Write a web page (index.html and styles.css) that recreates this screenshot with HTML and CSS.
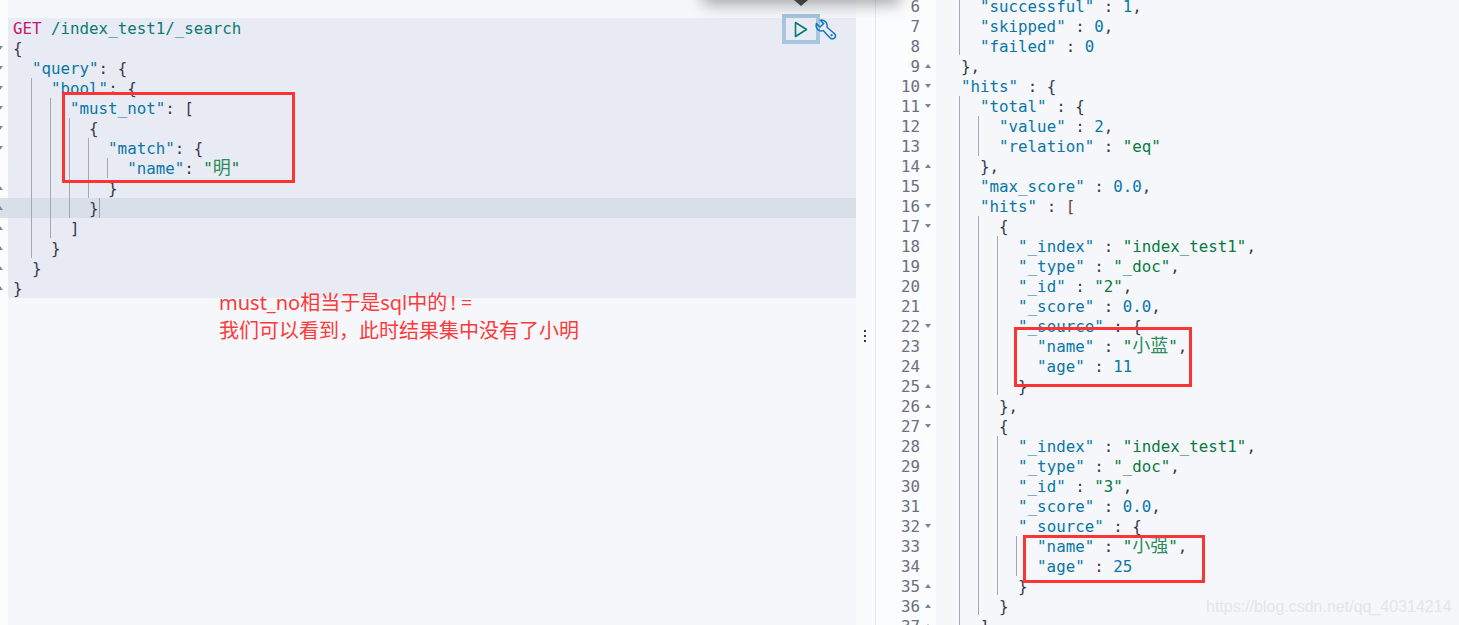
FILE: index.html
```html
<!DOCTYPE html>
<html lang="zh">
<head>
<meta charset="utf-8">
<title>Console</title>
<link rel="stylesheet" href="styles.css">
</head>
<body>
<div class="app">
  <section class="request">
    <div class="spacer"></div>
    <div class="line sel"><span class="fold"></span><code><i class="m">GET</i> <i class="u">/index_test1/_search</i></code></div>
    <div class="line sel"><span class="fold dn"></span><code><i class="p">{</i></code></div>
    <div class="line sel"><span class="fold dn"></span><code>  <i class="k">"query"</i><i class="p">: {</i></code></div>
    <div class="line sel"><span class="fold dn"></span><code>    <i class="k">"bool"</i><i class="p">: {</i></code></div>
    <div class="line sel"><span class="fold dn"></span><code>      <i class="k">"must_not"</i><i class="p">: [</i></code></div>
    <div class="line sel"><span class="fold dn"></span><code>        <i class="p">{</i></code></div>
    <div class="line sel"><span class="fold dn"></span><code>          <i class="k">"match"</i><i class="p">: {</i></code></div>
    <div class="line sel"><span class="fold"></span><code>            <i class="k">"name"</i><i class="p">:</i> <i class="s">"<i class="c">明</i>"</i></code></div>
    <div class="line sel"><span class="fold up"></span><code>          <i class="p">}</i></code></div>
    <div class="line active"><span class="fold up"></span><code>        <i class="p">}</i><b class="cursor"></b></code></div>
    <div class="line sel"><span class="fold up"></span><code>      <i class="p">]</i></code></div>
    <div class="line sel"><span class="fold up"></span><code>    <i class="p">}</i></code></div>
    <div class="line sel"><span class="fold up"></span><code>  <i class="p">}</i></code></div>
    <div class="line sel"><span class="fold up"></span><code><i class="p">}</i></code></div>

    <span class="guide g1"></span><span class="guide g2"></span><span class="guide g3"></span><span class="guide g4"></span><span class="guide g5"></span>

    <div class="actions">
      <button class="play" aria-label="run">
        <svg width="14" height="17" viewBox="0 0 14 17"><path d="M1.5 1.5 L12.5 8.5 L1.5 15.5 Z" fill="none" stroke="#017d73" stroke-width="1.6" stroke-linejoin="round"/></svg>
      </button>
      <svg class="wrench" width="22" height="22" viewBox="0 0 22 22"><path d="M5.2 1.2 L8.6 4.6 L5 8 L1.5 4.6 C.4 7.8 2 11 5.2 11.8 C6.2 12 7.4 12 8.2 11.6 L14.6 18.6 C16.2 20.4 18.8 20.2 19.8 18.8 C20.8 17.2 20.4 15.2 19 14.2 L12 8.2 C12.4 6.4 12 4.2 10.6 2.8 C9.2 1.4 7 .8 5.2 1.2 Z" fill="none" stroke="#1478c0" stroke-width="1.5" stroke-linejoin="round"/><circle cx="16.6" cy="16.2" r="1.1" fill="#1478c0"/></svg>
    </div>
    <div class="tip"></div>
    <div class="tip-arrow"></div>

    <span class="mark box1"></span>
    <div class="note">
      <p>must_no相当于是sql中的 <span class="bang">!</span>=</p>
      <p>我们可以看到，此时结果集中没有了小明</p>
    </div>
  </section>

  <div class="resizer"><span></span><span></span><span></span></div>

  <section class="response">
    <div class="rows" id="rows">
      <div class="row"><span class="num">6</span><span class="arr"></span><code>    <i class="k">"successful"</i> <i class="p">:</i> <i class="n">1</i><i class="p">,</i></code></div>
      <div class="row"><span class="num">7</span><span class="arr"></span><code>    <i class="k">"skipped"</i> <i class="p">:</i> <i class="n">0</i><i class="p">,</i></code></div>
      <div class="row"><span class="num">8</span><span class="arr"></span><code>    <i class="k">"failed"</i> <i class="p">:</i> <i class="n">0</i></code></div>
      <div class="row"><span class="num">9</span><span class="arr up"></span><code>  <i class="p">},</i></code></div>
      <div class="row"><span class="num">10</span><span class="arr dn"></span><code>  <i class="k">"hits"</i> <i class="p">: {</i></code></div>
      <div class="row"><span class="num">11</span><span class="arr dn"></span><code>    <i class="k">"total"</i> <i class="p">: {</i></code></div>
      <div class="row"><span class="num">12</span><span class="arr"></span><code>      <i class="k">"value"</i> <i class="p">:</i> <i class="n">2</i><i class="p">,</i></code></div>
      <div class="row"><span class="num">13</span><span class="arr"></span><code>      <i class="k">"relation"</i> <i class="p">:</i> <i class="s">"eq"</i></code></div>
      <div class="row"><span class="num">14</span><span class="arr up"></span><code>    <i class="p">},</i></code></div>
      <div class="row"><span class="num">15</span><span class="arr"></span><code>    <i class="k">"max_score"</i> <i class="p">:</i> <i class="n">0.0</i><i class="p">,</i></code></div>
      <div class="row"><span class="num">16</span><span class="arr dn"></span><code>    <i class="k">"hits"</i> <i class="p">: </i><i class="b">[</i></code></div>
      <div class="row"><span class="num">17</span><span class="arr dn"></span><code>      <i class="p">{</i></code></div>
      <div class="row"><span class="num">18</span><span class="arr"></span><code>        <i class="k">"_index"</i> <i class="p">:</i> <i class="s">"index_test1"</i><i class="p">,</i></code></div>
      <div class="row"><span class="num">19</span><span class="arr"></span><code>        <i class="k">"_type"</i> <i class="p">:</i> <i class="s">"_doc"</i><i class="p">,</i></code></div>
      <div class="row"><span class="num">20</span><span class="arr"></span><code>        <i class="k">"_id"</i> <i class="p">:</i> <i class="s">"2"</i><i class="p">,</i></code></div>
      <div class="row"><span class="num">21</span><span class="arr"></span><code>        <i class="k">"_score"</i> <i class="p">:</i> <i class="n">0.0</i><i class="p">,</i></code></div>
      <div class="row"><span class="num">22</span><span class="arr dn"></span><code>        <i class="k">"_source"</i> <i class="p">: {</i></code></div>
      <div class="row"><span class="num">23</span><span class="arr"></span><code>          <i class="k">"name"</i> <i class="p">:</i> <i class="s">"<i class="c">小蓝</i>"</i><i class="p">,</i></code></div>
      <div class="row"><span class="num">24</span><span class="arr"></span><code>          <i class="k">"age"</i> <i class="p">:</i> <i class="n">11</i></code></div>
      <div class="row"><span class="num">25</span><span class="arr up"></span><code>        <i class="p">}</i></code></div>
      <div class="row"><span class="num">26</span><span class="arr up"></span><code>      <i class="p">},</i></code></div>
      <div class="row"><span class="num">27</span><span class="arr dn"></span><code>      <i class="p">{</i></code></div>
      <div class="row"><span class="num">28</span><span class="arr"></span><code>        <i class="k">"_index"</i> <i class="p">:</i> <i class="s">"index_test1"</i><i class="p">,</i></code></div>
      <div class="row"><span class="num">29</span><span class="arr"></span><code>        <i class="k">"_type"</i> <i class="p">:</i> <i class="s">"_doc"</i><i class="p">,</i></code></div>
      <div class="row"><span class="num">30</span><span class="arr"></span><code>        <i class="k">"_id"</i> <i class="p">:</i> <i class="s">"3"</i><i class="p">,</i></code></div>
      <div class="row"><span class="num">31</span><span class="arr"></span><code>        <i class="k">"_score"</i> <i class="p">:</i> <i class="n">0.0</i><i class="p">,</i></code></div>
      <div class="row"><span class="num">32</span><span class="arr dn"></span><code>        <i class="k">"_source"</i> <i class="p">: {</i></code></div>
      <div class="row"><span class="num">33</span><span class="arr"></span><code>          <i class="k">"name"</i> <i class="p">:</i> <i class="s">"<i class="c">小强</i>"</i><i class="p">,</i></code></div>
      <div class="row"><span class="num">34</span><span class="arr"></span><code>          <i class="k">"age"</i> <i class="p">:</i> <i class="n">25</i></code></div>
      <div class="row"><span class="num">35</span><span class="arr up"></span><code>        <i class="p">}</i></code></div>
      <div class="row"><span class="num">36</span><span class="arr up"></span><code>      <i class="p">}</i></code></div>
      <div class="row"><span class="num">37</span><span class="arr up"></span><code>    <i class="p">]</i></code></div>
    </div>
    <span class="guide r1"></span><span class="guide r2"></span>
    <span class="guide r3"></span><span class="guide r4"></span>
    <span class="guide r5"></span><span class="guide r6"></span>
    <span class="guide r7"></span><span class="guide r8"></span>
    <span class="mark box2"></span>
    <span class="mark box3"></span>
    <span class="water">https://blog.csdn.net/qq_40314214</span>
  </section>
</div>
</body>
</html>
```
FILE: styles.css
```css
html, body {
  margin: 0;
  height: 625px;
  overflow: hidden;
  background: #f5f7fb;
}
.app {
  position: relative;
  display: flex;
  width: 1459px;
  height: 625px;
  overflow: hidden;
}
i { font-style: normal; }
code {
  font-family: "DejaVu Sans Mono", "Noto Sans CJK SC", monospace;
  font-size: 15.8px;
  line-height: 20px;
  white-space: pre;
  padding-top: 1px;
}
.c {
  font-family: "Noto Sans CJK SC", sans-serif;
  font-size: 18px;
  line-height: 0;
  color: #2b8c5c;
}
.k { color: #0a76a6; }
.s { color: #08793f; }
.n { color: #0a76a6; }
.p { color: #383a4e; }
.b { color: #7a3d3d; }
.m { color: #c6186f; }
.u { color: #0b7a76; }

/* request pane */
.request {
  position: relative;
  width: 856px;
  flex: none;
  background: linear-gradient(to right, #fbfcfe 0, #fbfcfe 8px, #f5f7fb 8px);
}
.spacer { height: 18px; }
.line {
  display: flex;
  height: 20px;
}
.line code { padding-left: 5px; }
.line.sel { background: linear-gradient(to right, #fbfcfe 0, #fbfcfe 8px, #e8ebf3 8px); }
.line.active { background: #d9dfe9; }
.fold {
  width: 8px;
  flex: none;
  position: relative;
  overflow: hidden;
}
.fold.dn::after, .fold.up::after {
  content: "";
  position: absolute;
  left: -3px;
  top: 8px;
  border-left: 3px solid transparent;
  border-right: 3px solid transparent;
}
.fold.dn::after { border-top: 4px solid #85888f; }
.fold.up::after { border-bottom: 4px solid #85888f; }
.cursor {
  display: inline-block;
  width: 1px;
  height: 20px;
  margin-top: -1px;
  background: #9aa0ab;
  vertical-align: top;
}
.guide {
  position: absolute;
  width: 1px;
  background: #a4a8b4;
}
.g1 { left: 31px; top: 78px; height: 180px; }
.g2 { left: 50px; top: 98px; height: 140px; }
.g3 { left: 69px; top: 118px; height: 100px; }
.g4 { left: 88px; top: 138px; height: 60px; }
.g5 { left: 107px; top: 158px; height: 20px; }

.actions {
  position: absolute;
  left: 782px;
  top: 14px;
  display: flex;
  align-items: center;
}
.play {
  width: 38px;
  height: 30px;
  box-sizing: border-box;
  border: 4px solid #a5c6e0;
  background: #e8ebf3;
  padding: 0;
  display: flex;
  align-items: center;
  justify-content: center;
}
.wrench { margin-left: -5px; margin-top: 2px; }
.tip {
  position: absolute;
  left: 703px;
  top: -30px;
  width: 197px;
  height: 30px;
  background: #404040;
  box-shadow: 0 4px 16px rgba(0, 0, 0, .35);
}
.tip-arrow {
  position: absolute;
  left: 794px;
  top: 0;
  border-left: 7px solid transparent;
  border-right: 7px solid transparent;
  border-top: 6px solid #404040;
}
.mark {
  position: absolute;
  box-sizing: border-box;
  border: 3px solid #fb3434;
}
.box1 { left: 62px; top: 92px; width: 233px; height: 91px; }
.note {
  position: absolute;
  left: 219px;
  top: 289px;
  color: #fb3a3a;
  font-family: "Noto Sans", "Noto Sans CJK SC", sans-serif;
  font-size: 20px;
  line-height: 28px;
  word-spacing: -2px;
}
.note p { margin: 0; }
.bang { letter-spacing: 5px; }

/* resizer */
.resizer {
  width: 19px;
  flex: none;
  background: #fafbfd;
  display: flex;
  flex-direction: column;
  justify-content: center;
  align-items: center;
  gap: 3px;
  padding: 47px 1px 0 0;
  box-sizing: border-box;
}
.resizer span {
  width: 2px;
  height: 2px;
  background: #3a3a48;
}

/* response pane */
.response {
  flex: 1;
  background: linear-gradient(to right, #e4e7ee 0, #e4e7ee 1px, #fbfcfe 1px, #fbfcfe 61px, #f5f7fb 61px);
  overflow: hidden;
}
.rows { margin-top: -4px; }
.row {
  display: flex;
  height: 20px;
}
.num {
  width: 45px;
  flex: none;
  text-align: right;
  font-family: "DejaVu Sans Mono", monospace;
  font-size: 15.8px;
  line-height: 20px;
  padding-top: 1px;
  color: #6a6f7c;
}
.arr {
  width: 22px;
  flex: none;
  position: relative;
}
.arr.dn::after, .arr.up::after {
  content: "";
  position: absolute;
  left: 5px;
  top: 8px;
  border-left: 3px solid transparent;
  border-right: 3px solid transparent;
}
.arr.dn::after { border-top: 4px solid #80848e; }
.arr.up::after { border-bottom: 4px solid #80848e; }
.r1 { left: 959px; top: 0; height: 55px; }
.r2 { left: 959px; top: 96px; height: 529px; }
.r3 { left: 978px; top: 116px; height: 40px; }
.r4 { left: 978px; top: 216px; height: 399px; }
.r5 { left: 997px; top: 236px; height: 159px; }
.r6 { left: 997px; top: 436px; height: 159px; }
.r7 { left: 1016px; top: 336px; height: 40px; }
.r8 { left: 1016px; top: 536px; height: 40px; }
.box2 { left: 1014px; top: 327px; width: 178px; height: 60px; }
.box3 { left: 1023px; top: 535px; width: 182px; height: 48px; }
.water {
  position: absolute;
  left: 1206px;
  top: 598px;
  font-family: "Liberation Sans", sans-serif;
  font-size: 16px;
  line-height: 18px;
  color: #e4e5e9;
  white-space: nowrap;
}
```
